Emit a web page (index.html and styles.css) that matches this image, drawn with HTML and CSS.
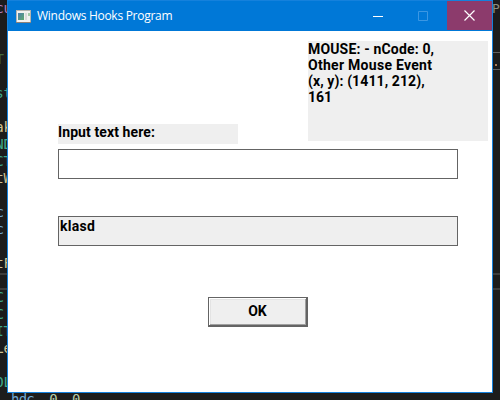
FILE: index.html
```html
<!DOCTYPE html>
<html lang="en">
<head>
<meta charset="utf-8">
<title>Windows Hooks Program</title>
<link rel="stylesheet" href="styles.css">
</head>
<body>
<div class="desktop">
  <div class="editor">
    <div class="line pink">cu</div><div class="line"></div><div class="line"></div>
    <div class="line green shift">T</div><div class="line"></div>
    <div class="line teal">st</div><div class="line"></div>
    <div class="line yellow">ak</div>
    <div class="line teal">ND</div>
    <div class="line teal">CT</div>
    <div class="line yellow">tW</div><div class="line"></div>
    <div class="line blue shift">c</div>
    <div class="line blue shift">c</div><div class="line"></div>
    <div class="line yellow">tF</div><div class="line"></div>
    <div class="line teal shift">C</div>
    <div class="line teal shift">C</div>
    <div class="line teal">IT</div>
    <div class="line yellow">Le</div><div class="line"></div>
    <div class="line teal">OL</div>
    <div class="line last"><span class="blue">hdc</span>, <span class="num">0</span>, <span class="num">0</span></div>
  </div>
  <div class="rule rule-a"></div>
  <div class="rule rule-b"></div>
  <div class="panel"><span class="tab">Pa</span><div class="box"><i class="speck"></i></div></div>

  <main class="window">
    <header class="titlebar">
      <svg class="app-icon" width="15" height="13" viewBox="0 0 15 13">
        <defs><linearGradient id="g" x1="0" y1="0" x2="1" y2="1"><stop offset="0" stop-color="#4c7fae"/><stop offset="1" stop-color="#61a96d"/></linearGradient></defs>
        <rect width="15" height="13" fill="#b4b4b0"/>
        <rect x="1" y="1" width="13" height="11" fill="#f2f2f0"/>
        <rect x="2" y="3" width="6" height="7" fill="url(#g)"/>
        <rect x="9" y="3" width="2" height="7" fill="#dcdcda"/>
        <rect x="12" y="3" width="2" height="3" fill="#a5cba8"/>
        <rect y="12" width="15" height="1" fill="#8b8179"/>
      </svg>
      <span class="title">Windows Hooks Program</span>
      <div class="control"><svg width="10" height="10"><path d="M0 5.5H10" stroke="#fff"/></svg></div>
      <div class="control maximize"><svg width="10" height="10"><path d="M.5 .5H9.500V9.500H.5Z" fill="none" stroke="#3b97e3"/></svg></div>
      <div class="control close"><svg width="11" height="11"><path d="M.5 .5L10.500 10.500M10.500 .5L.5 10.500" stroke="#fff" stroke-width="1.200"/></svg></div>
    </header>
    <section class="client">
      <div class="top">
        <label class="label">Input text here:</label>
        <div class="mouse">
          <div class="m1">MOUSE: - nCode: 0,</div>
          <div class="m2">Other Mouse Event</div>
          <div class="m3">(x, y): (1411, 212),</div>
          <div class="m4">161</div>
        </div>
      </div>
      <div class="field"></div>
      <div class="field output">klasd</div>
      <div class="button">OK</div>
    </section>
  </main>
</div>
</body>
</html>
```

FILE: styles.css
```css
* { box-sizing: border-box; }
body { margin: 0; }
svg { display: block; }
.desktop {
  position: relative;
  width: 500px;
  height: 400px;
  overflow: hidden;
  background: #1c1c1c;
}
.editor {
  font: 14px/17px "DejaVu Sans Mono", monospace;
  color: #ccc;
}
.line {
  display: flex;
  justify-content: flex-end;
  width: 12px;
  height: 17px;
  white-space: pre;
}
.shift { width: 4px; }
.last { width: auto; justify-content: flex-start; padding-left: 11px; letter-spacing: -0.8px; }
.pink { color: #b57ab8; }
.green { color: #43693b; }
.teal { color: #3da98a; }
.yellow { color: #d0c391; }
.blue { color: #6fa9d6; }
.num { color: #b5cea8; }
.rule {
  position: absolute;
  left: 0;
  width: 500px;
  height: 2px;
  background: #3c3c3c;
}
.rule-a { top: 273px; }
.rule-b { top: 288px; }
.panel {
  position: absolute;
  left: 493px;
  top: 0;
  width: 7px;
  height: 70px;
  overflow: hidden;
}
.tab {
  display: block;
  height: 52px;
  margin-left: -1px;
  color: #8e8e80;
  font: 13px/17px "DejaVu Sans Mono", monospace;
}
.box {
  height: 18px;
  padding: 11px 0 0 2px;
  border-top: 1px solid #606060;
  border-bottom: 1px solid #606060;
}
/* The tab label's line box is 17px tall; keep the box below it at its own offset. */
.speck { display: block; width: 2px; height: 2px; background: #a77b58; }
.window {
  position: absolute;
  left: 7px;
  top: 0;
  width: 486px;
  height: 393px;
  border: 1px solid #1581dc;
  background: #fff;
}
.titlebar {
  display: flex;
  align-items: center;
  height: 30px;
  padding-left: 8px;
  background: #0078d7;
}
.title {
  flex: 1;
  padding-left: 6px;
  color: #fff;
  font: 12px/28px "Open Sans", sans-serif;
  letter-spacing: -0.28px;
  white-space: nowrap;
}
.control {
  display: flex;
  align-items: center;
  justify-content: center;
  width: 45px;
  height: 29px;
  align-self: flex-start;
}
.maximize { margin-right: 2px; }
.close { background: #8c3b6c; }
.client {
  display: flex;
  flex-direction: column;
  align-items: flex-start;
  padding-left: 50px;
  color: #000;
  font: 700 14px/16px Roboto, sans-serif;
}
.top {
  display: flex;
  align-items: flex-start;
  width: 430px;
  height: 118px;
  padding-top: 10px;
}
.label {
  width: 180px;
  height: 20px;
  margin: 83px 70px 0 0;
  line-height: 17px;
  background: #efefef;
  letter-spacing: 0.1px;
}
.mouse {
  width: 180px;
  height: 100px;
  background: #efefef;
  white-space: nowrap;
}
.m1 { letter-spacing: 0.16px; }
.m2 { letter-spacing: 0.28px; }
.m3 { letter-spacing: 0.1px; }
.field {
  width: 400px;
  height: 30px;
  padding: 1px;
  border: 1px solid #646464;
  line-height: 17px;
}
.output { margin-top: 37px; background: #efefef; letter-spacing: 0.3px; }
.button {
  width: 100px;
  height: 30px;
  margin: 51px 0 0 150px;
  border: 1px solid #646464;
  border-right-width: 2px;
  border-bottom-width: 2px;
  background: #efefef;
  box-shadow: inset 1px 1px #fff, inset -1px -1px #a0a0a0, inset 2px 2px #e3e3e3;
  text-align: center;
  line-height: 27px;
}
```
